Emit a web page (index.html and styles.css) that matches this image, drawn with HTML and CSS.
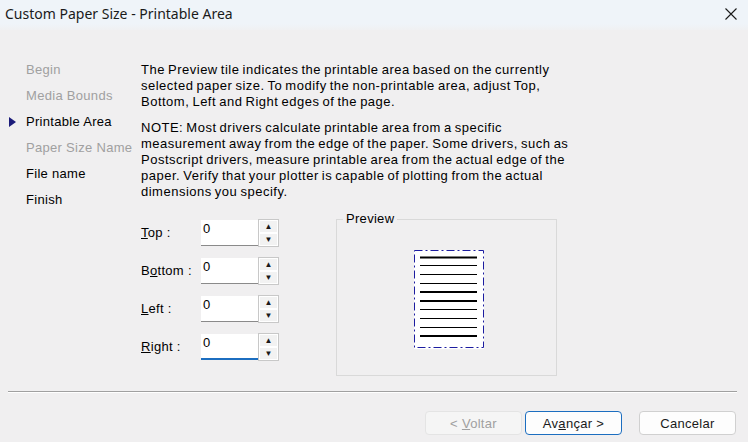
FILE: index.html
```html
<!DOCTYPE html>
<html lang="en">
<head>
  <meta charset="UTF-8">
  <title>Custom Paper Size - Printable Area</title>
  <link rel="stylesheet" href="styles.css">
</head>
<body>
  <div class="titlebar">
    <span class="title">Custom Paper Size - Printable Area</span>
    <svg class="close" width="12" height="12" viewBox="0 0 12 12">
      <path d="M0.5 0.5 L11.5 11.5 M11.5 0.5 L0.5 11.5" stroke="#1a1a1a" stroke-width="1.1" fill="none"/>
    </svg>
  </div>

  <div class="main">
    <ul class="steps">
      <li class="off">Begin</li>
      <li class="off">Media Bounds</li>
      <li class="current">Printable Area</li>
      <li class="off">Paper Size Name</li>
      <li>File name</li>
      <li>Finish</li>
    </ul>

    <div class="content">
      <p>The Preview tile indicates the printable area based on the currently<br>
        selected paper size. To modify the non-printable area, adjust Top,<br>
        Bottom, Left and Right edges of the page.</p>
      <p>NOTE: Most drivers calculate printable area from a specific<br>
        measurement away from the edge of the paper. Some drivers, such as<br>
        Postscript drivers, measure printable area from the actual edge of the<br>
        paper. Verify that your plotter is capable of plotting from the actual<br>
        dimensions you specify.</p>

      <div class="form-area">
        <div class="margins">
          <div class="spin-row">
            <label><u>T</u>op :</label>
            <div class="spin-input">0</div>
            <div class="spin-btns"><span>&#9650;</span><span>&#9660;</span></div>
          </div>
          <div class="spin-row">
            <label>B<u>o</u>ttom :</label>
            <div class="spin-input">0</div>
            <div class="spin-btns"><span>&#9650;</span><span>&#9660;</span></div>
          </div>
          <div class="spin-row">
            <label><u>L</u>eft :</label>
            <div class="spin-input">0</div>
            <div class="spin-btns"><span>&#9650;</span><span>&#9660;</span></div>
          </div>
          <div class="spin-row">
            <label><u>R</u>ight :</label>
            <div class="spin-input focused">0</div>
            <div class="spin-btns"><span>&#9650;</span><span>&#9660;</span></div>
          </div>
        </div>

        <div class="preview">
          <span class="legend">Preview</span>
          <svg class="page" width="70" height="99" viewBox="0 0 70 99">
            <rect x="0" y="0" width="70" height="99" fill="#fff"/>
            <rect x="0.5" y="0.5" width="69" height="97" fill="none" stroke="#1c1ca0" stroke-width="1" stroke-dasharray="8 3 2 3"/>
            <g stroke="#000" fill="none">
              <path d="M6 7.5 H63" stroke-width="2"/>
              <path d="M6 15.5 H63" stroke-width="1"/>
              <path d="M6 24.5 H63" stroke-width="1"/>
              <path d="M6 33.5 H63" stroke-width="1"/>
              <path d="M6 42 H63" stroke-width="2"/>
              <path d="M6 51 H63" stroke-width="2"/>
              <path d="M6 59.5 H63" stroke-width="1"/>
              <path d="M6 68.5 H63" stroke-width="1"/>
              <path d="M6 77.5 H63" stroke-width="1"/>
              <path d="M6 86 H63" stroke-width="2"/>
            </g>
          </svg>
        </div>
      </div>
    </div>
  </div>

  <div class="separator"></div>

  <div class="buttons">
    <button class="disabled">&lt; <u>V</u>oltar</button>
    <button class="default">Av<u>a</u>nçar &gt;</button>
    <button class="cancel">Cancelar</button>
  </div>
</body>
</html>
```

FILE: styles.css
```css
body {
  margin: 0;
  width: 748px;
  height: 442px;
  overflow: hidden;
  background-color: #f0eff0;
  font-family: 'Liberation Sans', Arial, sans-serif;
  font-size: 13px;
  letter-spacing: 0.3px;
  color: #000;
}
.titlebar {
  display: flex;
  align-items: center;
  justify-content: space-between;
  height: 30px;
  padding: 0 11px 0 5px;
  background: linear-gradient(to bottom, #eff4f9 0, #eff4f9 24px, #f0eff0 32px);
}
.title {
  font-family: 'Noto Sans', sans-serif;
  font-size: 14px;
  letter-spacing: 0;
  color: #1a1a1a;
  margin-top: -3px;
}
.close {
  margin-top: -2px;
}
.main {
  display: flex;
  padding: 27px 0 0 8px;
  height: 334px;
}
.steps {
  list-style: none;
  margin: 0;
  padding: 0;
  width: 133px;
}
.steps li {
  height: 26px;
  line-height: 26px;
  padding-left: 18px;
  white-space: nowrap;
  position: relative;
}
.steps li.off {
  color: #a0a0a0;
}
.steps li.current::before {
  content: '';
  position: absolute;
  left: 1px;
  top: 8px;
  border-top: 5px solid transparent;
  border-bottom: 5px solid transparent;
  border-left: 7px solid #1c1c7a;
}
.content {
  width: 430px;
  padding-top: 5px;
}
.content p {
  margin: 0 0 10px 0;
  line-height: 16px;
  white-space: nowrap;
  letter-spacing: 0.5px;
  word-spacing: -1px;
}
.form-area {
  display: flex;
  margin-top: 19px;
}
.margins {
  display: flex;
  flex-direction: column;
  gap: 10px;
}
.spin-row {
  display: flex;
  align-items: flex-start;
  height: 28px;
}
.spin-row label {
  width: 60px;
  line-height: 28px;
}
.spin-input {
  width: 55px;
  height: 25px;
  margin-top: 1px;
  padding-left: 2px;
  line-height: 18px;
  background-color: #fff;
  border-bottom: 1px solid #8a8a8a;
}
.spin-input.focused {
  border-bottom: 2px solid #1c6ec0;
  height: 24px;
}
.spin-btns {
  display: flex;
  flex-direction: column;
  width: 19px;
  height: 26px;
  border: 1px solid #c8c8c8;
  background-color: #fff;
}
.spin-btns span {
  flex: 1;
  display: flex;
  align-items: center;
  justify-content: center;
  font-size: 8px;
  color: #1a1a1a;
  margin: 1px;
  background-color: #f2f2f2;
}
.preview {
  position: relative;
  margin-left: 57px;
  border: 1px solid #d9d9d9;
  display: flex;
  align-items: center;
  justify-content: center;
  padding: 3px 0 0 4px;
  box-sizing: border-box;
  width: 221px;
  height: 157px;
}
.legend {
  position: absolute;
  top: -9px;
  left: 6px;
  padding: 0 3px;
  background-color: #f0eff0;
  line-height: 16px;
}
.page {
  display: block;
}
.separator {
  margin: 0 11px 0 8px;
  height: 1px;
  background-color: #a0a0a0;
  border-bottom: 1px solid #ffffff;
}
.buttons {
  display: flex;
  justify-content: flex-end;
  padding: 18px 12px 0 0;
}
button {
  width: 97px;
  height: 24px;
  margin-left: 3px;
  border: 1px solid #d0d0d0;
  border-radius: 4px;
  background-color: #fdfdfd;
  font-family: 'Liberation Sans', Arial, sans-serif;
  font-size: 13px;
  letter-spacing: 0.3px;
  color: #1a1a1a;
  padding: 0;
}
button.disabled {
  color: #a0a0a0;
  background-color: #f5f5f5;
  border-color: #e4e4e4;
}
button.default {
  border-color: #1c6ec0;
}
button.cancel {
  margin-left: 17px;
}
```
